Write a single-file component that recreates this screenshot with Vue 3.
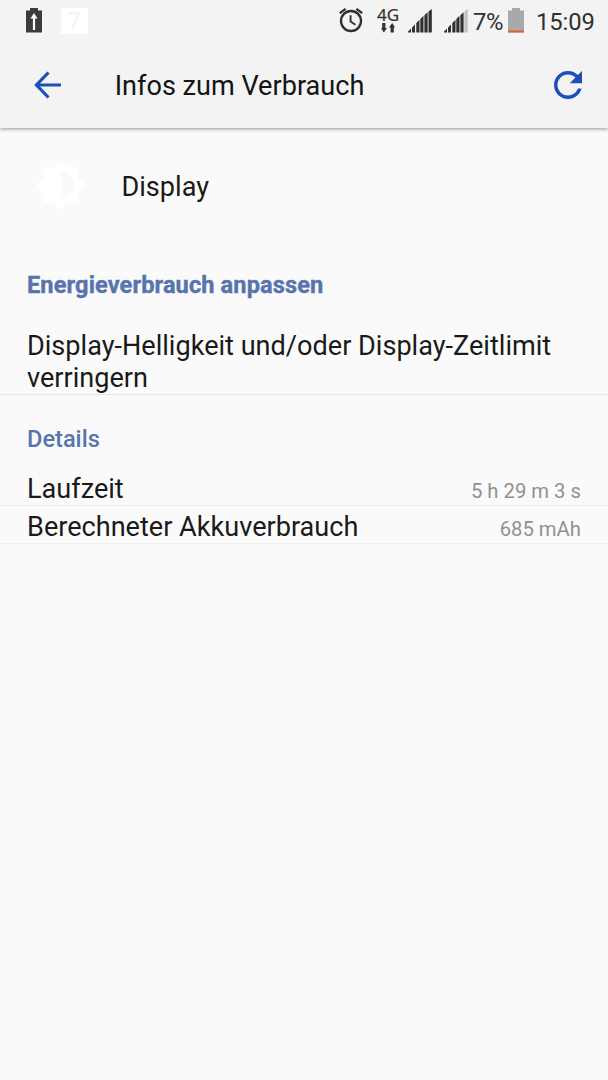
<script setup>
const rows = [
  { label: 'Laufzeit', value: '5 h 29 m 3 s' },
  { label: 'Berechneter Akkuverbrauch', value: '685 mAh' },
]
</script>

<template>
  <div class="screen">
    <header class="top">
      <div class="status">
        <svg class="s-charge" width="16" height="26" viewBox="0 0 16 26">
          <path d="M0 2.500h4V0h8v2.500h4V24.500H0z" fill="#3c3c3c" />
          <path d="M8 5l3.600 5.500H9.100V22H6.900V10.500H4.400z" fill="#fff" />
        </svg>
        <span class="s-seven">7</span>
        <svg class="s-alarm" width="24" height="26" viewBox="0 0 24 26" fill="none" stroke="#303030">
          <circle cx="12" cy="14" r="10" stroke-width="2.300" />
          <path d="M11.600 8.200v6.300l4.800 3.200" stroke-width="1.900" />
          <path d="M.8 6.200L6.600 1.800M17.400 1.800l5.800 4.400" stroke-width="2.300" />
        </svg>
        <div class="s-net">
          <span>4G</span>
          <svg width="14" height="10" viewBox="0 0 14 10" fill="#303030">
            <path d="M1.200 0h3.200v5H6L2.800 9.500 0 5h1.200zM9.600 9.500h3.200v-5H14L11.200 0 8 4.500h1.600z" />
          </svg>
        </div>
        <svg class="s-sig1" width="24" height="25" viewBox="0 0 24 25" fill="#303030">
          <path d="M0 23.500v-1l3-3v4zM4 23.500v-5l3-3v8zM8.300 23.500V14l3.200-3.200v12.700zM12.300 23.500V10l3.200-3.200v16.700zM16.400 23.500V6.200l3.200-3v20.300zM20.500 23.500V2.400L23.800 0v23.500z" />
        </svg>
        <svg class="s-sig2" width="24" height="25" viewBox="0 0 24 25" fill="#303030">
          <path d="M0 23.500v-1l3-3v4zM4 23.500v-5l3-3v8zM8.300 23.500V14l3.200-3.200v12.700zM12.300 23.500V10l3.200-3.200v16.700zM16.400 23.500V6.200l3.200-3v20.300z" />
          <path d="M20.300 23.500V2.400L23.800 0v23.500z" fill="#c4c4c4" />
        </svg>
        <span class="s-pct">7%</span>
        <svg class="s-batt" width="16" height="25" viewBox="0 0 16 25">
          <path d="M0 2.500h4V0h8v2.500h4V24.500H0z" fill="#a9a9a9" />
          <path d="M0 22.500h16v2H0z" fill="#d4622f" />
        </svg>
        <span class="s-time">15:09</span>
      </div>
      <div class="bar">
        <svg class="back" width="28" height="28" viewBox="0 0 28 28" fill="none" stroke="#1c4fb8" stroke-width="3.200">
          <path d="M27 14H2.500M14.500 1.500L2.400 14l12.100 12.500" />
        </svg>
        <h1>Infos zum Verbrauch</h1>
        <svg class="reload" width="28" height="28" viewBox="4 4 16 16" fill="#1c4fb8">
          <path d="M17.650 6.350C16.200 4.900 14.210 4 12 4c-4.420 0-7.990 3.580-7.990 8s3.570 8 7.990 8c3.730 0 6.840-2.550 7.730-6h-2.080c-.82 2.330-3.040 4-5.650 4-3.310 0-6-2.690-6-6s2.690-6 6-6c1.660 0 3.140.69 4.220 1.780L13 11h7V4z" />
        </svg>
      </div>
    </header>

    <main>
      <div class="app">
        <svg width="48" height="48" viewBox="1 1 22 22" fill="#fff">
          <path fill-rule="evenodd" d="M20 15.310L23.310 12 20 8.690V4h-4.690L12 .69 8.690 4H4v4.690L.69 12 4 15.310V20h4.690L12 23.310 15.310 20H20zM12 18V6c3.310 0 6 2.690 6 6s-2.690 6-6 6z" />
        </svg>
        <span class="app-name">Display</span>
      </div>
      <h2 class="strong">Energieverbrauch anpassen</h2>
      <p class="hint">Display-Helligkeit und/oder Display-Zeitlimit verringern</p>
      <h2 class="details">Details</h2>
      <div v-for="row in rows" :key="row.label" class="row">
        <span>{{ row.label }}</span>
        <span class="value">{{ row.value }}</span>
      </div>
    </main>
  </div>
</template>

<style>
body {
  margin: 0;
  background: #fafafa;
}
</style>

<style scoped>
.screen {
  width: 608px;
  height: 1080px;
  overflow: hidden;
  background: #fafafa;
  color: #1a1a1a;
  font-family: Roboto, sans-serif;
  font-size: 27.100px;
  line-height: 32px;
}
svg {
  display: block;
  flex: none;
  overflow: visible;
}
h1,
h2,
p {
  margin: 0;
  font-weight: 400;
}
.top {
  height: 128px;
  background: #f3f3f3;
  box-shadow: 0 1px 4px rgba(0, 0, 0, 0.42);
}
.status {
  display: flex;
  align-items: flex-start;
  height: 42px;
  color: #303030;
  font-size: 23.800px;
  line-height: 28px;
  white-space: nowrap;
}
.s-charge {
  margin: 8px 0 0 26px;
}
.s-seven {
  width: 27px;
  height: 26px;
  margin: 8px 0 0 19px;
  border-radius: 1px;
  background: #fff;
  color: #f5f5f5;
  font-weight: 500;
  line-height: 27px;
  text-align: center;
}
.s-alarm {
  margin: 7px 0 0 251px;
}
.s-net {
  display: flex;
  flex-direction: column;
  align-items: center;
  width: 22px;
  margin: 6px 0 0 14px;
  font-family: "Noto Sans", sans-serif;
  font-size: 17px;
  line-height: 17px;
  -webkit-text-stroke: 0.2px #303030;
}
.s-sig1 {
  margin: 9px 0 0 9px;
}
.s-sig2 {
  margin: 9px 0 0 12px;
}
.s-pct {
  width: 34px;
  margin: 8px 0 0 5px;
  letter-spacing: -0.3px;
}
.s-batt {
  margin: 8px 0 0 1px;
}
.s-time {
  margin: 8px 0 0 12px;
  letter-spacing: -0.1px;
}
.bar {
  display: flex;
  align-items: center;
  height: 86px;
}
.back {
  margin-left: 34px;
}
.bar h1 {
  flex: 1;
  margin-left: 52.700px;
  padding-top: 1px;
  color: #141414;
  font-size: 27.100px;
}
.reload {
  margin-right: 26.500px;
}
.app {
  display: flex;
  align-items: center;
  gap: 36.500px;
  height: 114px;
  padding-left: 37px;
}
.app-name {
  padding-top: 4px;
}
h2 {
  padding: 0 27px;
  color: #5874ad;
  font-size: 23.600px;
  line-height: 28px;
}
.strong {
  margin-top: 29px;
  font-weight: 700;
  letter-spacing: 0.1px;
  -webkit-text-stroke: 0.4px #5874ad;
}
.hint {
  margin-top: 31px;
  padding: 0 27px;
  height: 64px;
  border-bottom: 1px solid #e6e6e6;
}
.details {
  margin-top: 30px;
  font-weight: 500;
}
.row {
  display: flex;
  align-items: baseline;
  justify-content: space-between;
  box-sizing: border-box;
  height: 38.500px;
  padding: 5px 27px 0;
  border-bottom: 1px solid #ececec;
}
.details + .row {
  margin-top: 14px;
  padding-top: 6px;
}
.value {
  color: #919191;
  font-size: 20.270px;
}
</style>
